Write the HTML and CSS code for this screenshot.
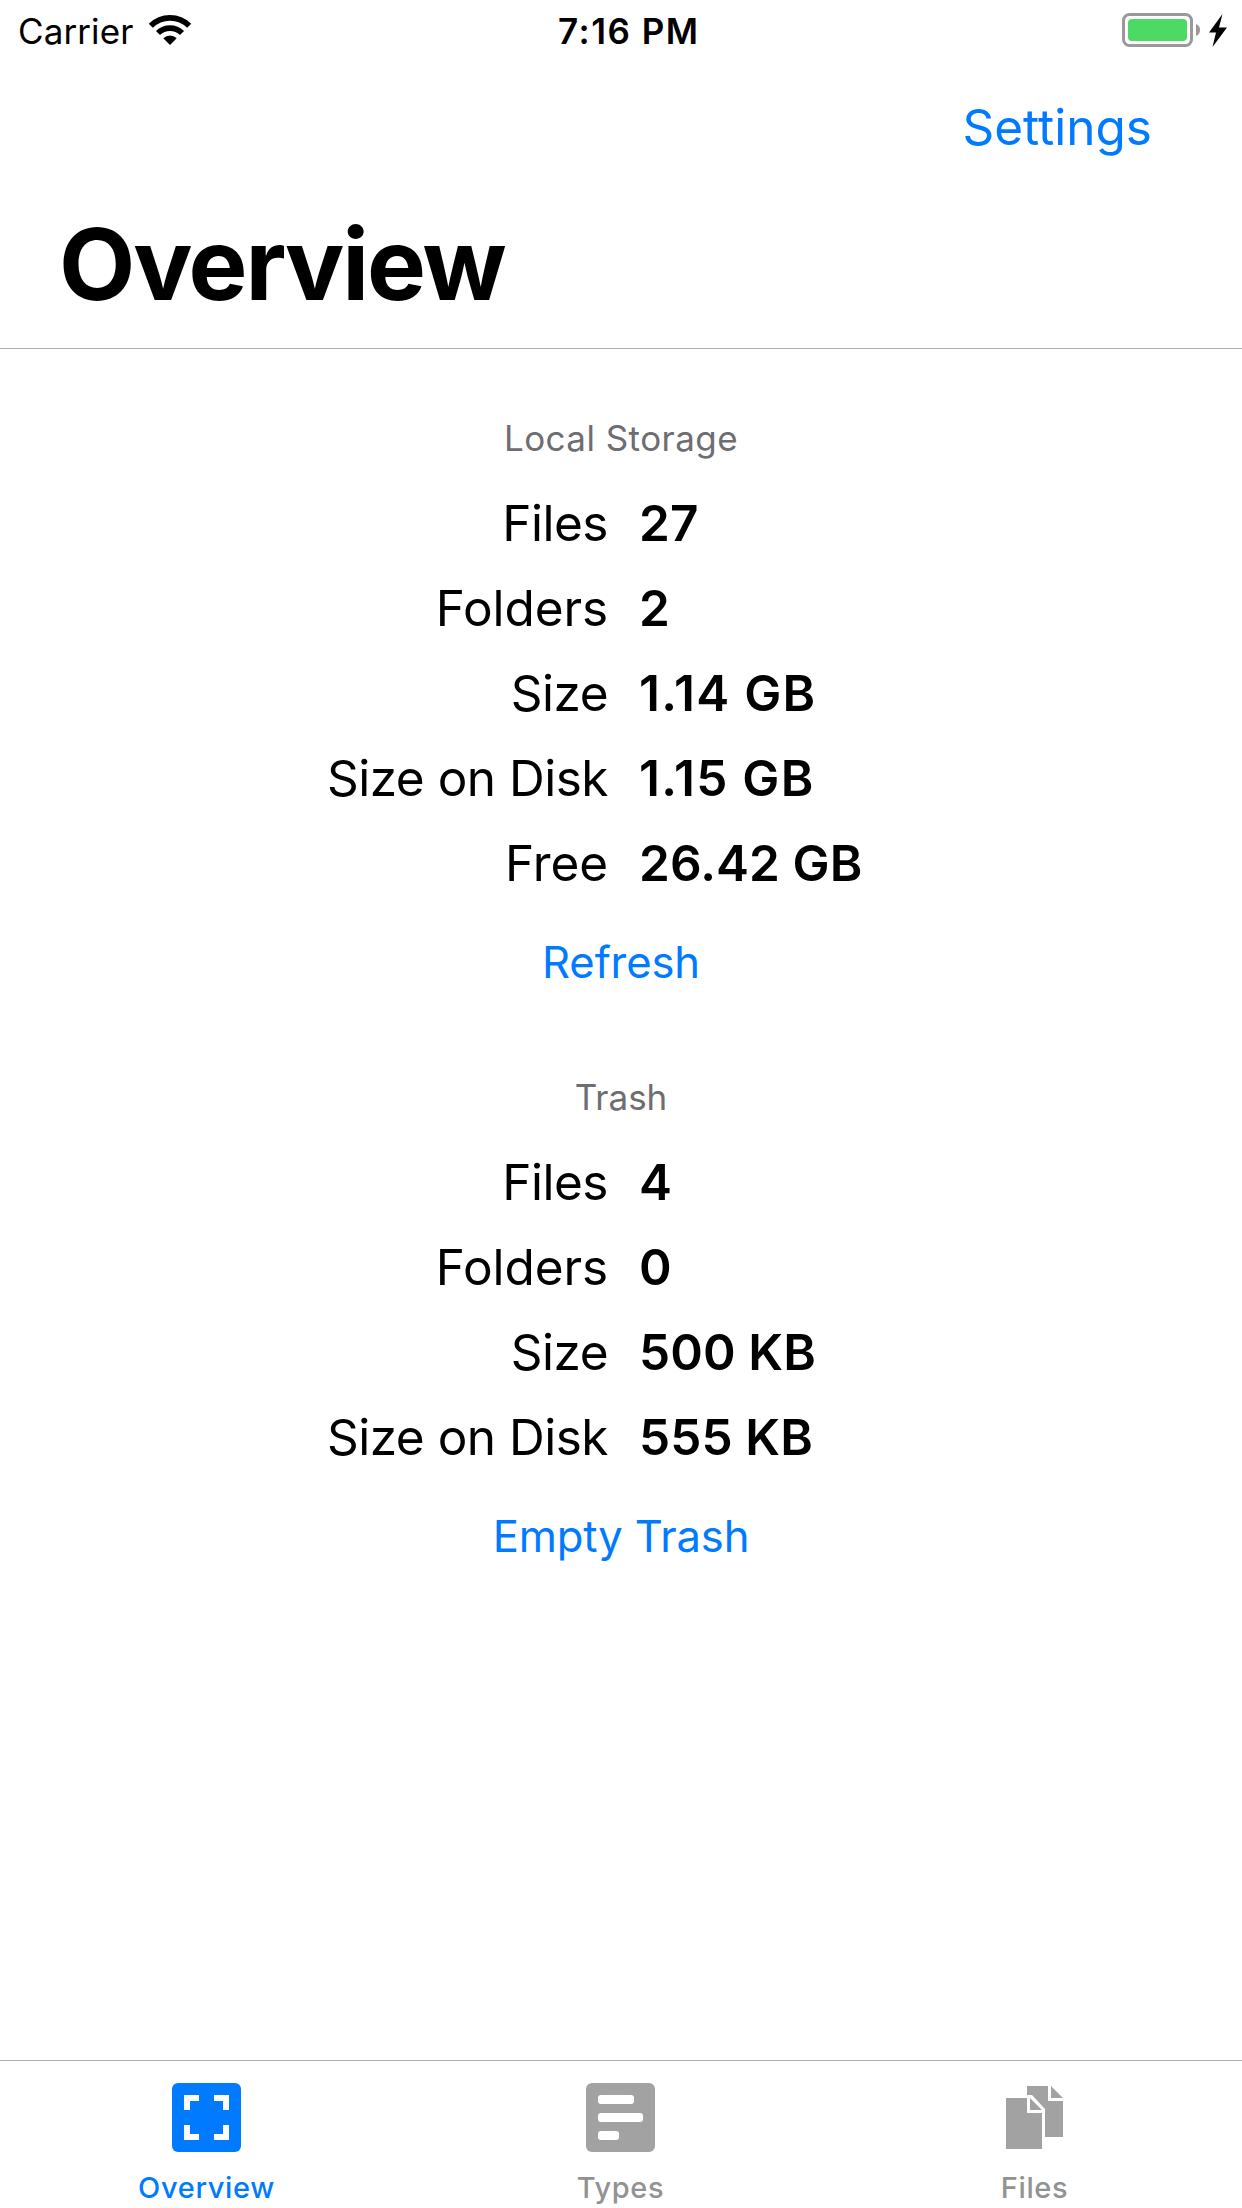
FILE: index.html
```html
<!DOCTYPE html>
<html lang="en">
<head>
<meta charset="utf-8">
<title>Overview</title>
<link rel="stylesheet" href="styles.css">
</head>
<body>
<div class="screen">
  <div class="status">
    <div class="status-left">
      <span>Carrier</span>
      <svg class="wifi" width="44" height="32" viewBox="0 0 44 32">
        <path d="M2.8 11.8a27.15 27.15 0 0 1 38.4 0M10 19a17 17 0 0 1 24 0" fill="none" stroke="#000" stroke-width="5.8"/>
        <path d="M22 31l-6.700-6.700a9.500 9.500 0 0 1 13.400 0z"/>
      </svg>
    </div>
    <span class="time">7:16 PM</span>
    <svg class="battery" width="106" height="36" viewBox="0 0 106 36">
      <rect x="1.5" y="2.5" width="68" height="31" rx="6" fill="none" stroke="#999" stroke-width="3"/>
      <rect x="6" y="7" width="59" height="22" rx="4" fill="#4cd964"/>
      <path d="M74 12q4 1.500 4 6t-4 6z" fill="#999"/>
      <path d="M100.500 2L87 20.500h7L90.500 35L105 15.500h-8z"/>
    </svg>
  </div>
  <header class="header">
    <div class="nav"><a class="settings">Settings</a></div>
    <h1 class="title">Overview</h1>
  </header>
  <main class="content">
    <section class="group">
      <h2 class="heading spaced">Local Storage</h2>
      <dl class="stats">
        <dt>Files</dt><dd>27</dd>
        <dt class="even">Folders</dt><dd>2</dd>
        <dt>Size</dt><dd class="loose">1.14 GB</dd>
        <dt>Size on Disk</dt><dd class="loose">1.15 GB</dd>
        <dt class="even">Free</dt><dd>26.42 GB</dd>
      </dl>
      <a class="action">Refresh</a>
    </section>
    <section class="group">
      <h2 class="heading">Trash</h2>
      <dl class="stats">
        <dt>Files</dt><dd>4</dd>
        <dt class="even">Folders</dt><dd>0</dd>
        <dt>Size</dt><dd>500 KB</dd>
        <dt>Size on Disk</dt><dd>555 KB</dd>
      </dl>
      <a class="action">Empty Trash</a>
    </section>
  </main>
  <nav class="tabs">
    <a class="tab active">
      <svg width="70" height="70" viewBox="0 0 70 70" fill="currentColor">
        <rect width="69" height="69" rx="6"/>
        <path d="M12 12h15v6h-9v9h-6zM42 12h15v15h-6v-9h-9zM12 42h6v9h9v6h-15zM51 42h6v15h-15v-6h9z" fill="#fff"/>
      </svg>
      <span>Overview</span>
    </a>
    <a class="tab">
      <svg width="70" height="70" viewBox="0 0 70 70" fill="#a2a2a2">
        <rect width="69" height="69" rx="6"/>
        <g fill="#fff"><rect x="12" y="12" width="36" height="9" rx="3"/><rect x="12" y="30" width="45" height="9" rx="3"/><rect x="12" y="48" width="21" height="9" rx="3"/></g>
      </svg>
      <span>Types</span>
    </a>
    <a class="tab">
      <svg width="70" height="70" viewBox="0 0 70 70" fill="#a2a2a2">
        <path d="M6 15h21v15h15v36H6zM30 15l12 12H30zM27 3h21v15h15v36H45V26L32 12h-5zM51 3l12 12H51z"/>
      </svg>
      <span>Files</span>
    </a>
  </nav>
</div>
</body>
</html>
```
FILE: styles.css
```css
* { box-sizing: border-box; margin: 0; padding: 0; }
body { background: #fff; color: #000; font-family: Inter, "Liberation Sans", sans-serif; }
svg { display: block; flex: none; }
.screen { display: flex; flex-direction: column; width: 1242px; height: 2208px; }

.status { display: grid; grid-template-columns: 540px 1fr auto; height: 62px; padding: 0 14px 0 18px; font-size: 35px; line-height: 62px; }
.status-left { display: flex; letter-spacing: 0.1px; }
.wifi { margin: 14px 0 0 15px; }
.time { font-weight: 600; letter-spacing: 1.5px; }
.battery { margin-top: 12px; }

.header { height: 287px; border-bottom: 1px solid #b2b2b2; }
.nav { display: flex; justify-content: flex-end; height: 130px; padding-right: 90px; font-size: 49.5px; line-height: 130px; }
.settings, .action { color: #007aff; }
.settings { letter-spacing: 0; }
.title { padding-left: 59px; font-size: 99px; font-weight: 700; line-height: 144px; letter-spacing: -2.15px; }

.content { display: flex; flex-direction: column; flex: 1; gap: 36px; padding-top: 48px; }
.heading { height: 84px; color: #6d6d72; font-size: 35px; font-weight: 400; line-height: 83px; text-align: center; }
.spaced { letter-spacing: 0.45px; }
.stats { display: grid; grid-template-columns: 608px 1fr; column-gap: 31px; font-size: 49.5px; line-height: 85px; }
.stats dt { text-align: right; letter-spacing: -0.5px; }
.stats .even { letter-spacing: -0.1px; }
.stats dd { font-weight: 600; letter-spacing: 0.1px; }
.stats .loose { letter-spacing: 1.3px; }
.action { display: block; height: 114px; font-size: 43.6px; line-height: 114px; letter-spacing: -0.15px; text-align: center; }

.tabs { display: grid; grid-template-columns: repeat(3, 1fr); height: 148px; border-top: 1px solid #b2b2b2; }
.tab { display: flex; flex-direction: column; align-items: center; padding-top: 22px; color: #929292; font-size: 29px; font-weight: 500; line-height: 36px; letter-spacing: 0.65px; }
.tab span { margin: 17px 1px 0 0; }
.active { color: #007aff; }
```
